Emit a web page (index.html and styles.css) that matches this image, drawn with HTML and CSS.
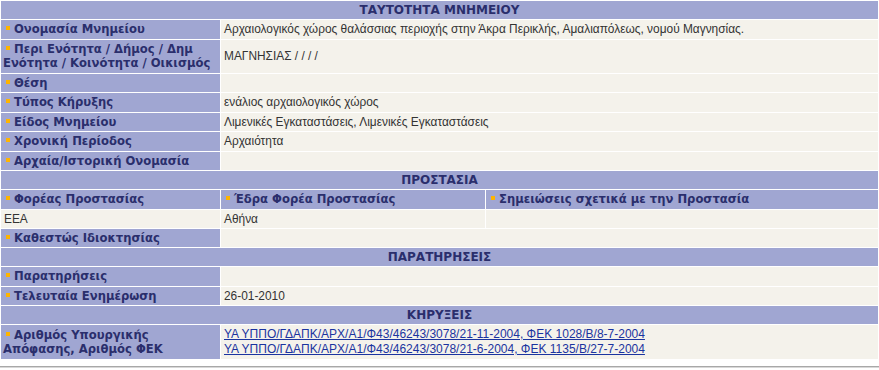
FILE: index.html
```
<!DOCTYPE html>
<html lang="el">
<head>
<meta charset="utf-8">
<title>Ταυτότητα Μνημείου</title>
<link rel="stylesheet" href="styles.css">
</head>
<body>
<table class="monument">
  <colgroup>
    <col class="c1">
    <col class="c2">
    <col class="c3">
  </colgroup>
  <tbody>
    <tr><th class="section" colspan="3">ΤΑΥΤΟΤΗΤΑ ΜΝΗΜΕΙΟΥ</th></tr>
    <tr><td class="label"><span class="dot"></span>Ονομασία Μνημείου</td><td class="value" colspan="2">Αρχαιολογικός χώρος θαλάσσιας περιοχής στην Άκρα Περικλής, Αμαλιαπόλεως, νομού Μαγνησίας.</td></tr>
    <tr><td class="label"><span class="dot"></span>Περι Ενότητα / Δήμος / Δημ Ενότητα / Κοινότητα / Οικισμός</td><td class="value" colspan="2">ΜΑΓΝΗΣΙΑΣ / / / /</td></tr>
    <tr><td class="label"><span class="dot"></span>Θέση</td><td class="value" colspan="2"></td></tr>
    <tr><td class="label"><span class="dot"></span>Τύπος Κήρυξης</td><td class="value" colspan="2">ενάλιος αρχαιολογικός χώρος</td></tr>
    <tr><td class="label"><span class="dot"></span>Είδος Μνημείου</td><td class="value" colspan="2">Λιμενικές Εγκαταστάσεις, Λιμενικές Εγκαταστάσεις</td></tr>
    <tr><td class="label"><span class="dot"></span>Χρονική Περίοδος</td><td class="value" colspan="2">Αρχαιότητα</td></tr>
    <tr><td class="label"><span class="dot"></span>Αρχαία/Ιστορική Ονομασία</td><td class="value" colspan="2"></td></tr>

    <tr><th class="section" colspan="3">ΠΡΟΣΤΑΣΙΑ</th></tr>
    <tr>
      <td class="label"><span class="dot"></span>Φορέας Προστασίας</td>
      <td class="label"><span class="dot"></span>Έδρα Φορέα Προστασίας</td>
      <td class="label"><span class="dot"></span>Σημειώσεις σχετικά με την Προστασία</td>
    </tr>
    <tr><td class="value">ΕΕΑ</td><td class="value">Αθήνα</td><td class="value"></td></tr>
    <tr><td class="label"><span class="dot"></span>Καθεστώς Ιδιοκτησίας</td><td class="value" colspan="2"></td></tr>

    <tr><th class="section" colspan="3">ΠΑΡΑΤΗΡΗΣΕΙΣ</th></tr>
    <tr><td class="label"><span class="dot"></span>Παρατηρήσεις</td><td class="value" colspan="2"></td></tr>
    <tr><td class="label"><span class="dot"></span>Τελευταία Ενημέρωση</td><td class="value" colspan="2">26-01-2010</td></tr>

    <tr><th class="section" colspan="3">ΚΗΡΥΞΕΙΣ</th></tr>
    <tr>
      <td class="label"><span class="dot"></span>Αριθμός Υπουργικής Απόφασης, Αριθμός ΦΕΚ</td>
      <td class="value links" colspan="2">
        <a href="#">ΥΑ ΥΠΠΟ/ΓΔΑΠΚ/ΑΡΧ/Α1/Φ43/46243/3078/21-11-2004, ΦΕΚ 1028/Β/8-7-2004</a><br>
        <a href="#">ΥΑ ΥΠΠΟ/ΓΔΑΠΚ/ΑΡΧ/Α1/Φ43/46243/3078/21-6-2004, ΦΕΚ 1135/Β/27-7-2004</a>
      </td>
    </tr>
  </tbody>
</table>
<div class="rule"></div>
</body>
</html>
```
FILE: styles.css
```
html, body {
  margin: 0;
  padding: 0;
  background: #ffffff;
}

.monument {
  width: 879px;
  table-layout: fixed;
  border-collapse: separate;
  border-spacing: 1px;
  background: #ffffff;
}

.c1 { width: 219px; }
.c2 { width: 264px; }

.section {
  background: #a0a6d2;
  color: #2a2e6c;
  font-family: "DejaVu Sans", Verdana, sans-serif;
  font-weight: bold;
  font-size: 12px;
  line-height: 14px;
  padding: 2px 3px;
  text-align: center;
}

.label {
  background: #a0a6d2;
  color: #2a2e6c;
  font-family: "DejaVu Sans", Verdana, sans-serif;
  font-weight: bold;
  font-size: 11.6px;
  line-height: 14.5px;
  padding: 2px 1px 2px 2px;
  text-align: left;
  vertical-align: middle;
}

.value {
  background: #f4f2eb;
  color: #333333;
  font-family: "Liberation Sans", Arial, sans-serif;
  font-size: 11.9px;
  line-height: 14px;
  padding: 2px 3px;
  vertical-align: middle;
}

.links {
  font-size: 12px;
  line-height: 15px;
}

.value a {
  color: #1b34a0;
  text-decoration: underline;
}

.dot {
  display: inline-block;
  width: 4px;
  height: 4px;
  background: #ffb400;
  margin: 0 4px 0 3px;
  vertical-align: 3px;
}

.rule {
  margin-top: 6px;
  height: 0;
  border-top: 1px solid #a8a8a8;
  border-bottom: 1px solid #d8d8d8;
}
```
